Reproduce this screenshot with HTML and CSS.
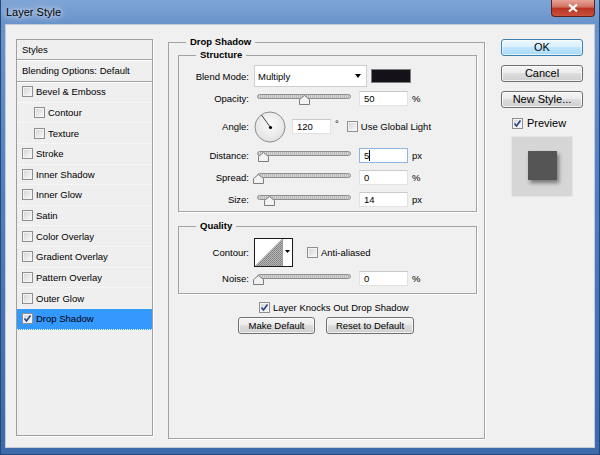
FILE: index.html
```html
<!DOCTYPE html>
<html>
<head>
<meta charset="utf-8">
<title>Layer Style</title>
<link rel="stylesheet" href="styles.css">
</head>
<body>
<div class="window">
  <div class="titlebar">
    <span class="title">Layer Style</span>
    <span class="close"><svg width="12" height="10" viewBox="0 0 12 10"><path d="M2 1.5L10 8.5M10 1.5L2 8.5" stroke="#fff" stroke-width="2.3"/></svg></span>
  </div>
  <div class="client">
    <div class="styles-list">
      <div class="hdr hdr-styles">Styles</div>
      <div class="hdr hdr-blend">Blending Options: Default</div>
      <div class="item"><span class="cb"></span>Bevel &amp; Emboss</div>
      <div class="item sub"><span class="cb"></span>Contour</div>
      <div class="item sub"><span class="cb"></span>Texture</div>
      <div class="item"><span class="cb"></span>Stroke</div>
      <div class="item"><span class="cb"></span>Inner Shadow</div>
      <div class="item"><span class="cb"></span>Inner Glow</div>
      <div class="item"><span class="cb"></span>Satin</div>
      <div class="item"><span class="cb"></span>Color Overlay</div>
      <div class="item"><span class="cb"></span>Gradient Overlay</div>
      <div class="item"><span class="cb"></span>Pattern Overlay</div>
      <div class="item"><span class="cb"></span>Outer Glow</div>
      <div class="item selected"><span class="cb"><svg width="9" height="9" viewBox="0 0 9 9"><path d="M1.5 4.5L3.5 7L7.5 1.5" fill="none" stroke="#233e8a" stroke-width="1.5"/></svg></span>Drop Shadow</div>
    </div>

    <fieldset class="group main">
      <legend>Drop Shadow</legend>
      <fieldset class="group structure">
        <legend>Structure</legend>
        <div class="row">
          <span class="lbl">Blend Mode:</span>
          <div class="select"><span>Multiply</span><span class="arrow"></span></div>
          <span class="swatch"></span>
        </div>
        <div class="row">
          <span class="lbl">Opacity:</span>
          <div class="slider"><div class="track"></div><svg class="thumb" style="left:45px" width="11" height="10" viewBox="0 0 11 10"><path d="M0.5 9.5V4.5L5.5 0.5L10.5 4.5V9.5Z" fill="#f2f2f2" stroke="#7c7c7c"/></svg></div>
          <span class="field">50</span><span class="unit">%</span>
        </div>
        <div class="row row-angle">
          <span class="lbl">Angle:</span>
          <svg class="dial" width="32" height="32" viewBox="0 0 32 32">
            <defs><radialGradient id="dg" cx="50%" cy="40%" r="60%"><stop offset="0" stop-color="#fbfbfb"/><stop offset="1" stop-color="#e2e2e2"/></radialGradient></defs>
            <circle cx="16" cy="16" r="15" fill="url(#dg)" stroke="#8c8c8c"/>
            <line x1="16.5" y1="16.5" x2="7.5" y2="4" stroke="#444" stroke-width="1"/>
            <circle cx="16.5" cy="16.5" r="1.6" fill="#000"/>
          </svg>
          <span class="field f-angle">120</span><span class="deg">°</span>
          <span class="cb cb-global"></span><span class="cb-text">Use Global Light</span>
        </div>
        <div class="row">
          <span class="lbl">Distance:</span>
          <div class="slider"><div class="track"></div><svg class="thumb" style="left:4px" width="11" height="10" viewBox="0 0 11 10"><path d="M0.5 9.5V4.5L5.5 0.5L10.5 4.5V9.5Z" fill="#f2f2f2" stroke="#7c7c7c"/></svg></div>
          <span class="field focus">5<span class="caret"></span></span><span class="unit">px</span>
        </div>
        <div class="row">
          <span class="lbl">Spread:</span>
          <div class="slider"><div class="track"></div><svg class="thumb" style="left:-1px" width="11" height="10" viewBox="0 0 11 10"><path d="M0.5 9.5V4.5L5.5 0.5L10.5 4.5V9.5Z" fill="#f2f2f2" stroke="#7c7c7c"/></svg></div>
          <span class="field">0</span><span class="unit">%</span>
        </div>
        <div class="row">
          <span class="lbl">Size:</span>
          <div class="slider"><div class="track"></div><svg class="thumb" style="left:10px" width="11" height="10" viewBox="0 0 11 10"><path d="M0.5 9.5V4.5L5.5 0.5L10.5 4.5V9.5Z" fill="#f2f2f2" stroke="#7c7c7c"/></svg></div>
          <span class="field">14</span><span class="unit">px</span>
        </div>
      </fieldset>

      <fieldset class="group quality">
        <legend>Quality</legend>
        <div class="row row-contour">
          <span class="lbl">Contour:</span>
          <svg class="contour" width="39" height="29" viewBox="0 0 39 29">
            <defs><pattern id="dots" width="2" height="2" patternUnits="userSpaceOnUse"><rect width="2" height="2" fill="#b8b8b8"/><rect width="1" height="1" fill="#7c7c7c"/><rect x="1" y="1" width="1" height="1" fill="#8c8c8c"/></pattern></defs>
            <rect x="0.5" y="0.5" width="38" height="28" fill="#fff" stroke="#1a1a1a"/>
            <polygon points="1,28 28,1 28,28" fill="url(#dots)"/>
            <line x1="28.5" y1="1" x2="28.5" y2="28" stroke="#9a9a9a"/>
            <polygon points="31,12 36,12 33.5,15" fill="#000"/>
          </svg>
          <span class="cb cb-anti"></span><span class="cb-text">Anti-aliased</span>
        </div>
        <div class="row">
          <span class="lbl">Noise:</span>
          <div class="slider"><div class="track"></div><svg class="thumb" style="left:-1px" width="11" height="10" viewBox="0 0 11 10"><path d="M0.5 9.5V4.5L5.5 0.5L10.5 4.5V9.5Z" fill="#f2f2f2" stroke="#7c7c7c"/></svg></div>
          <span class="field">0</span><span class="unit">%</span>
        </div>
      </fieldset>

      <div class="knock"><span class="cb"><svg width="9" height="9" viewBox="0 0 9 9"><path d="M1.5 4.5L3.5 7L7.5 1.5" fill="none" stroke="#233e8a" stroke-width="1.5"/></svg></span><span class="cb-text">Layer Knocks Out Drop Shadow</span></div>
      <div class="defaults">
        <button class="btn small b-make">Make Default</button>
        <button class="btn small b-reset">Reset to Default</button>
      </div>
    </fieldset>

    <div class="side">
      <button class="btn ok">OK</button>
      <button class="btn">Cancel</button>
      <button class="btn">New Style...</button>
      <div class="preview-check"><span class="cb"><svg width="9" height="9" viewBox="0 0 9 9"><path d="M1.5 4.5L3.5 7L7.5 1.5" fill="none" stroke="#233e8a" stroke-width="1.5"/></svg></span><span class="pv-text">Preview</span></div>
      <div class="preview"><div class="preview-square"></div></div>
    </div>
  </div>
</div>
</body>
</html>
```
FILE: styles.css
```css
* { box-sizing: border-box; }
html, body { margin: 0; padding: 0; }
body {
  width: 600px;
  height: 455px;
  overflow: hidden;
  font-family: "Liberation Sans", Arial, sans-serif;
  font-size: 9.5px;
  color: #000;
  background: #3a66a5;
}
.window {
  width: 600px;
  height: 455px;
  display: flex;
  flex-direction: column;
  padding: 0 4px 6px;
  border: 1px solid #24487c;
  border-top: none;
  background: linear-gradient(180deg, #7fa5d6 0, #6a93cb 24px, #4f7ebe 200px, #3c6aab 100%);
}
.titlebar {
  height: 24px;
  display: flex;
  justify-content: space-between;
  align-items: flex-start;
  padding-left: 1px;
  flex: none;
}
.title {
  margin-top: 6px;
  font-size: 11px;
  line-height: 13px;
  color: #000;
  text-shadow: 0 0 8px rgba(255,255,255,.95), 0 0 4px rgba(255,255,255,.8);
}
.close {
  width: 44px;
  height: 17px;
  border: 1px solid #5e2219;
  border-top: none;
  border-radius: 0 0 4px 4px;
  background: linear-gradient(#e6a397, #d2705f 45%, #b8321f 50%, #c9523d 100%);
  display: flex;
  align-items: center;
  justify-content: center;
}
.client {
  height: 424px;
  display: flex;
  align-items: flex-start;
  padding: 11px 11px 0 10px;
  background: #f0f0f0;
  border: 1px solid #c3ccd8;
  flex: none;
}

/* Styles list */
.styles-list {
  width: 137px;
  height: 397px;
  margin-top: 3px;
  flex: none;
  border: 1px solid #9f9f9f;
  background: #efefef;
  box-shadow: 1px 1px 0 #fff;
}
.hdr {
  display: flex;
  align-items: center;
  padding-left: 5px;
  border-bottom: 1px solid #a3a3a3;
  box-shadow: 0 1px 0 #fff;
}
.hdr-styles { height: 20px; }
.hdr-blend { height: 22px; }
.item {
  height: 20.64px;
  display: flex;
  align-items: center;
  padding-left: 5px;
  border-bottom: 1px dotted #fdfdfd;
}
.item .cb { margin-right: 3px; }
.item.sub { padding-left: 17px; }
.item.selected { background: #3399ff; }

/* checkbox */
.cb {
  width: 11px;
  height: 11px;
  flex: none;
  display: inline-flex;
  align-items: center;
  justify-content: center;
  border: 1px solid #8e8f8f;
  background: linear-gradient(135deg, #d2d2d2 0%, #f6f6f6 85%);
  box-shadow: inset 0 0 0 1px #f4f4f4;
}
.cb-text { margin-left: 3px; }

/* group boxes */
fieldset { margin: 0; min-width: 0; }
.group {
  border: 1px solid #a3a3a3;
  padding: 0;
  box-shadow: 1px 1px 0 #fff;
}
.group > legend {
  font-weight: bold;
  line-height: 12px;
  padding: 0 4px;
}
.main {
  width: 317px;
  height: 403px;
  margin-left: 15px;
  padding: 0 7px 0 9px;
  flex: none;
}
.main > legend { margin-left: 8px; }
.structure {
  width: 299px;
  margin-top: 1px;
  padding: 4px 0 1px;
}
.structure > legend, .quality > legend { margin-left: 17px; }
.quality {
  width: 299px;
  margin-top: 8px;
  padding: 5px 0 4px;
}

.row {
  display: flex;
  align-items: center;
  height: 22px;
}
.row-angle { height: 35px; }
.row-contour { height: 30px; }
.lbl {
  width: 70px;
  margin-right: 5px;
  text-align: right;
  flex: none;
}
.select {
  width: 113px;
  height: 22px;
  background: #fff;
  border: 1px solid #cfcfcf;
  display: flex;
  align-items: center;
  justify-content: space-between;
  padding: 0 5px 0 3px;
}
.arrow {
  width: 0;
  height: 0;
  border-left: 3.5px solid transparent;
  border-right: 3.5px solid transparent;
  border-top: 4px solid #000;
}
.swatch {
  width: 40px;
  height: 14px;
  margin-left: 4px;
  background: #141218;
  border: 1px solid #7d7d7d;
}
.slider {
  position: relative;
  width: 100px;
  height: 22px;
  flex: none;
}
.track {
  margin: 7px 3px 0;
  height: 5px;
  border: 1px solid #8f8f8f;
  border-radius: 3px;
  background: repeating-linear-gradient(90deg, #b9b9b9 0 1px, #d6d6d6 1px 2px);
}
.thumb {
  position: absolute;
  top: 8px;
}
.field {
  width: 49px;
  height: 15px;
  margin-left: 5px;
  background: #fff;
  border: 1px solid #e2e2e2;
  border-top-color: #c9c9c9;
  padding-left: 4px;
  line-height: 13px;
  flex: none;
}
.field.focus { border-color: #8db6e3; }
.caret {
  display: inline-block;
  width: 1px;
  height: 11px;
  background: #000;
  vertical-align: -2px;
}
.unit { margin-left: 4px; }
.dial { flex: none; }
.f-angle { width: 39px; margin-left: 6px; }
.deg { margin-left: 4px; margin-top: -6px; }
.cb-global { margin-left: 8px; }
.contour { flex: none; }
.cb-anti { margin-left: 14px; }

.knock {
  display: flex;
  align-items: center;
  height: 16px;
  margin-top: 5px;
  padding-left: 81px;
}
.defaults {
  display: flex;
  margin-top: 2px;
  padding-left: 60px;
}

/* buttons */
.btn {
  font-family: "Liberation Sans", Arial, sans-serif;
  font-size: 11px;
  color: #000;
  height: 17px;
  padding: 0;
  line-height: 15px;
  border: 1px solid #707070;
  border-radius: 3px;
  background: linear-gradient(#f4f4f4 0, #ebebeb 50%, #dddddd 50%, #cfcfcf 100%);
  box-shadow: inset 0 0 0 1px rgba(255,255,255,.7);
}
.btn.ok {
  border-color: #3c7fb1;
  background: linear-gradient(#eaf6fd 0, #d9f0fc 50%, #bee6fd 50%, #a7d9f5 100%);
}
.btn.small { font-size: 9.5px; }
.b-make { width: 77px; }
.b-reset { width: 88px; margin-left: 11px; }

.side {
  width: 82px;
  margin-left: 16px;
  padding-top: 3px;
  flex: none;
}
.side .btn {
  display: block;
  width: 82px;
  margin-bottom: 9px;
}
.preview-check {
  display: flex;
  align-items: center;
  height: 12px;
  margin-left: 11px;
  font-size: 11px;
}
.pv-text { margin-left: 4px; }
.preview {
  width: 62px;
  height: 61px;
  margin: 7px 0 0 10px;
  background: #d6d6d6;
  border: 1px solid #e6e6e6;
  display: flex;
  align-items: center;
  justify-content: center;
  padding-bottom: 2px;
}
.preview-square {
  width: 29px;
  height: 29px;
  background: #555;
  box-shadow: 2px 3px 4px rgba(0,0,0,.45);
}
```
